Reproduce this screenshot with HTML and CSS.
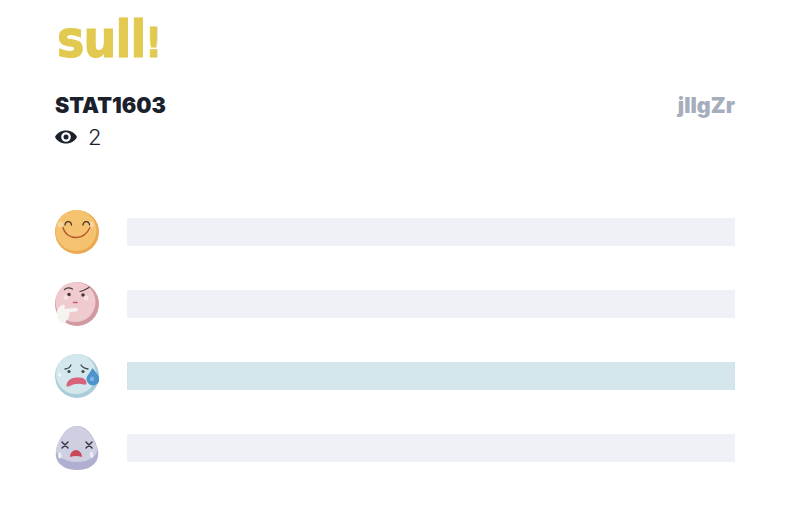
FILE: index.html
```html
<!DOCTYPE html>
<html lang="en">
<head>
<meta charset="utf-8">
<title>sull!</title>
<link rel="stylesheet" href="styles.css">
</head>
<body>
<main class="page">
  <div class="logo">sull<span class="bang">!</span></div>
  <div class="head">
    <h1 class="code">STAT1603</h1>
    <span class="id">jIlgZr</span>
  </div>
  <div class="views">
    <svg class="eye" viewBox="0 0 22 14" width="22" height="14"><path fill="#1a202c" fill-rule="evenodd" d="M11 .5C6 .5 2 3 0 7c2 4 6 6.500 11 6.500S20 11 22 7C20 3 16 .5 11 .5zm0 1.700a4.800 4.800 0 1 1 0 9.600 4.800 4.800 0 0 1 0-9.600z"/><circle cx="11" cy="7" r="2.500" fill="#1a202c"/></svg>
    <span class="count">2</span>
  </div>
  <div class="rows">
    <div class="row">
      <svg class="face" viewBox="0 0 44 44" width="44" height="44">
        <circle cx="22" cy="22" r="22" fill="#eba94f"/>
        <circle cx="21" cy="20.500" r="20.500" fill="#f5c270"/>
        <circle cx="5.500" cy="14.500" r="3" fill="#f8d6a0"/>
        <circle cx="36" cy="14.500" r="3" fill="#f8d6a0"/>
        <path d="M8 17.500c1.500 6.500 7 10 13 10s11-3.500 14-10" fill="none" stroke="#b5562e" stroke-width="1.300" stroke-linecap="round"/>
        <path d="M10 15c.5-4.500 6-4.500 6.500 0M28 15c.5-4.500 6-4.500 6.500 0" fill="none" stroke="#4a3328" stroke-width="1.300" stroke-linecap="round"/>
      </svg>
      <div class="bar"></div>
    </div>
    <div class="row">
      <svg class="face" viewBox="0 0 44 44" width="44" height="44">
        <circle cx="22" cy="22" r="22" fill="#d19aa1"/>
        <circle cx="20.500" cy="20" r="20" fill="#efcace"/>
        <path d="M9.500 7.500c2.500-2 5-2 8-.5M25 9.500c3-.5 6-2.500 9-4" fill="none" stroke="#4a3a3e" stroke-width="1.200" stroke-linecap="round"/>
        <circle cx="14" cy="12.500" r="1.800" fill="#4a3a3e"/>
        <circle cx="28" cy="13" r="1.800" fill="#4a3a3e"/>
        <circle cx="11" cy="15.500" r="2.500" fill="#f8dfe2"/>
        <circle cx="31" cy="16" r="2.500" fill="#f8dfe2"/>
        <path d="M18.500 20.500h3.500" stroke="#d0566a" stroke-width="1.500" stroke-linecap="round"/>
        <path d="M2 30c0-3 3-6 5-7 1.500-.5 3 0 3 1.500 0 1-.5 1.800-1 2.500l12-1c2.500 0 2.500 3.500 0 3.500l-7 .8c1 1.500 1 3-.5 4 .5 2-.5 3.500-2 4-.5 2.500-3 3.200-5 3-3-.5-5-8-4.500-11.300z" fill="#f5f4f1"/>
      </svg>
      <div class="bar"></div>
    </div>
    <div class="row">
      <svg class="face" viewBox="0 0 44 44" width="44" height="44">
        <circle cx="22" cy="22" r="22" fill="#a9cdd9"/>
        <circle cx="21" cy="20" r="20" fill="#d3e7ec"/>
        <circle cx="4.500" cy="21" r="1.800" fill="#eef7f9"/>
        <path d="M10 15c2 0 5-1.500 6-4M26 11c1 2 4 3.500 7 4" fill="none" stroke="#3c4a52" stroke-width="1.300" stroke-linecap="round"/>
        <circle cx="14" cy="17.500" r="1.600" fill="#3c4a52"/>
        <circle cx="28" cy="17.500" r="1.600" fill="#3c4a52"/>
        <path d="M11.500 32c0-5 4-8 10-8.500 6-.5 10 1.500 10 5.500 0 1.500-1 2-2.500 1.500-5-1.500-10-1-14 1.500-1.800.8-3.500.5-3.500.5z" fill="#d8637a"/>
        <path d="M37.500 14c3 4 7 8 7 11a6.500 6.500 0 0 1-13 0c0-3 4-7 6-11z" fill="#4d94cf"/>
        <circle cx="37" cy="25" r="2.200" fill="#7fb6e2"/>
      </svg>
      <div class="bar"></div>
    </div>
    <div class="row">
      <svg class="face" viewBox="0 0 44 44" width="44" height="44">
        <path d="M22 0c11 0 18 12 21 25 2 12-8 19-21 19S-1 37 1 25C4 12 11 0 22 0z" fill="#b0afd2"/>
        <path d="M22 0c9 0 17 11 20 23 1 7-9 13-20 13S0 30 1 23C4 11 13 0 22 0z" fill="#cfcfe2"/>
        <path d="M7 16l6 6M13 16l-6 6M31 16l6 6M37 16l-6 6" stroke="#3a3a48" stroke-width="1.500" stroke-linecap="round"/>
        <path d="M15 31c0-4 3-7 6-7s6 3 6 7c-4-1.500-8-1.500-12 0z" fill="#c9485a"/>
        <path d="M5 26c2 2 2 5 1 6s-3 0-3-2 1-3 2-4zM36 25c2 2 3 4 2 6s-3 0-3-2 0-3 1-4z" fill="#eeeef6"/>
      </svg>
      <div class="bar"></div>
    </div>
  </div>
</main>
</body>
</html>
```
FILE: styles.css
```css
* { box-sizing: border-box; }
html, body { margin: 0; background: #fff; }
.page {
  width: 806px;
  height: 518px;
  padding: 11px 71px 0 55px;
  overflow: hidden;
  font-family: Inter, "Liberation Sans", sans-serif;
  color: #1a202c;
}
.logo {
  height: 61px;
  padding-left: 2px;
  font-family: "DejaVu Sans", sans-serif;
  font-weight: 700;
  font-size: 46px;
  line-height: 61px;
  color: #e2c94f;
  -webkit-text-stroke: 1px #e2c94f;
  letter-spacing: -0.800px;
  transform: scaleY(1.140);
  transform-origin: 0 47px;
}
.bang {
  font-size: 36px;
}
.head {
  margin-top: 20px;
  display: flex;
  justify-content: space-between;
  align-items: center;
  height: 26px;
}
.code {
  margin: 0;
  font-size: 21.500px;
  font-weight: 900;
  line-height: 26px;
}
.id {
  font-size: 21.500px;
  font-weight: 900;
  color: #a6aebd;
}
.views {
  margin-top: 7px;
  height: 24px;
  display: flex;
  align-items: center;
  gap: 11px;
}
.eye { display: block; }
.count { font-size: 22px; line-height: 24px; font-weight: 300; }
.rows {
  margin-top: 61px;
  display: flex;
  flex-direction: column;
  gap: 28px;
}
.row {
  display: flex;
  align-items: center;
  gap: 28px;
  height: 44px;
}
.face { flex: none; display: block; }
.bar {
  flex: 1;
  height: 28px;
  background: #eef2f7;
}
.row:nth-child(3) .bar { background: #d5e5ec; }
```
